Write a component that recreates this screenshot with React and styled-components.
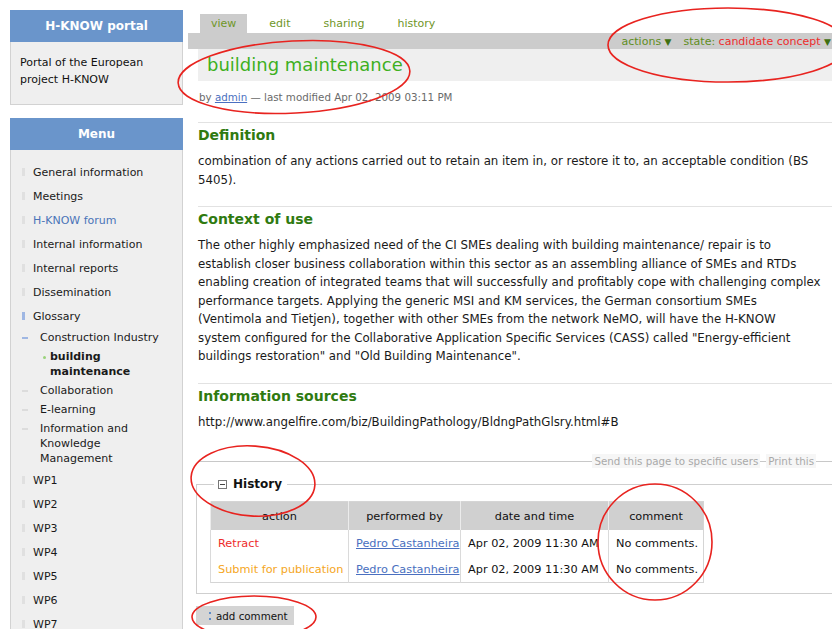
import styled, { createGlobalStyle } from "styled-components";

const GlobalStyle = createGlobalStyle`
  html, body {
    margin: 0;
    padding: 0;
    background: #fff;
    overflow: hidden;
  }
  body {
    font-family: "DejaVu Sans", Verdana, sans-serif;
    font-size: 11px;
    color: #111;
  }
`;

// left navigation tree
const menuItems = [
  { label: "General information", level: 0 },
  { label: "Meetings", level: 0 },
  { label: "H-KNOW forum", level: 0, link: true },
  { label: "Internal information", level: 0 },
  { label: "Internal reports", level: 0 },
  { label: "Dissemination", level: 0 },
  { label: "Glossary", level: 0, open: true },
  { label: "Construction Industry", level: 1, open: true },
  { label: ["building", "maintenance"], level: 2, current: true },
  { label: "Collaboration", level: 1 },
  { label: "E-learning", level: 1 },
  { label: ["Information and", "Knowledge", "Management"], level: 1 },
  { label: "WP1", level: 0 },
  { label: "WP2", level: 0 },
  { label: "WP3", level: 0 },
  { label: "WP4", level: 0 },
  { label: "WP5", level: 0 },
  { label: "WP6", level: 0 },
  { label: "WP7", level: 0 },
];

const tabs = ["view", "edit", "sharing", "history"];

const contextLines = [
  "The other highly emphasized need of the CI SMEs dealing with building maintenance/ repair is to",
  "establish closer business collaboration within this sector as an assembling alliance of SMEs and RTDs",
  "enabling creation of integrated teams that will successfully and profitably cope with challenging complex",
  "performance targets. Applying the generic MSI and KM services, the German consortium SMEs",
  "(Ventimola and Tietjen), together with other SMEs from the network NeMO, will have the H-KNOW",
  "system configured for the Collaborative Application Specific Services (CASS) called \"Energy-efficient",
  "buildings restoration\" and \"Old Building Maintenance\".",
];

const history = [
  { action: "Retract", kind: "retract", who: "Pedro Castanheira", when: "Apr 02, 2009 11:30 AM", comment: "No comments." },
  { action: "Submit for publication", kind: "submit", who: "Pedro Castanheira", when: "Apr 02, 2009 11:30 AM", comment: "No comments." },
];

// hand-drawn review marks laid over the page
const marks = [
  { cx: 294, cy: 77, rx: 116, ry: 36, rot: -3 },
  { cx: 728, cy: 45, rx: 120, ry: 37, rot: 0 },
  { cx: 253, cy: 481, rx: 62, ry: 35, rot: 4 },
  { cx: 655, cy: 542, rx: 57, ry: 58, rot: 0 },
  { cx: 254, cy: 617, rx: 62, ry: 21, rot: 0 },
];

const App = () => {
  return (
    <Page>
      <GlobalStyle />
      <Sidebar>
        <Portlet>
          <PortletHeader>H-KNOW portal</PortletHeader>
          <PortalBody>
            Portal of the European
            <br />
            project H-KNOW
          </PortalBody>
        </Portlet>
        <Portlet $grow>
          <PortletHeader>Menu</PortletHeader>
          <MenuBody>
            {menuItems.map((item, i) => (
              <MenuItem key={i} $level={item.level}>
                <Bullet $level={item.level} $open={item.open} $current={item.current} />
                <MenuLabel $link={item.link} $current={item.current}>
                  {Array.isArray(item.label)
                    ? item.label.map((l, j) => (
                        <span key={j}>
                          {j > 0 && <br />}
                          {l}
                        </span>
                      ))
                    : item.label}
                </MenuLabel>
              </MenuItem>
            ))}
          </MenuBody>
        </Portlet>
      </Sidebar>

      <Main>
        <Tabs>
          {tabs.map((t) => (
            <Tab key={t} $active={t === "view"}>
              {t}
            </Tab>
          ))}
        </Tabs>
        <ActionBar>
          <ActionLink>
            actions <Caret>▼</Caret>
          </ActionLink>
          <ActionLink>
            state: <StateValue>candidate concept</StateValue> <Caret>▼</Caret>
          </ActionLink>
        </ActionBar>
        <TitleBox>building maintenance</TitleBox>
        <Byline>
          by <UserLink>admin</UserLink> — last modified Apr 02, 2009 03:11 PM
        </Byline>

        <Section $first>
          <SectionTitle>Definition</SectionTitle>
          <Text>
            combination of any actions carried out to retain an item in, or restore it to, an acceptable condition (BS
            <br />
            5405).
          </Text>
        </Section>

        <Section>
          <SectionTitle>Context of use</SectionTitle>
          <Text>
            {contextLines.map((line, i) => (
              <span key={i}>
                {i > 0 && <br />}
                {line}
              </span>
            ))}
          </Text>
        </Section>

        <Section>
          <SectionTitle>Information sources</SectionTitle>
          <Text>http://www.angelfire.com/biz/BuildingPathology/BldngPathGlsry.html#B</Text>
        </Section>

        <DocActions>
          <Rule $grow />
          <DocAction>Send this page to specific users</DocAction>
          <Rule />
          <DocAction>Print this</DocAction>
          <Rule $tail />
        </DocActions>

        <HistoryBox>
          <Legend>
            <svg width="9" height="9" viewBox="0 0 9 9">
              <rect x="0.5" y="0.5" width="8" height="8" fill="#fff" stroke="#777" />
              <line x1="2" y1="4.5" x2="7" y2="4.5" stroke="#444" />
            </svg>
            <b>History</b>
          </Legend>
          <HistoryTable>
            <colgroup>
              <col style={{ width: 138 }} />
              <col style={{ width: 112 }} />
              <col style={{ width: 148 }} />
              <col style={{ width: 95 }} />
            </colgroup>
            <thead>
              <tr>
                <Th>action</Th>
                <Th>performed by</Th>
                <Th>date and time</Th>
                <Th>comment</Th>
              </tr>
            </thead>
            <tbody>
              {history.map((row, i) => (
                <tr key={i}>
                  <Td $kind={row.kind}>{row.action}</Td>
                  <Td>
                    <UserLink>{row.who}</UserLink>
                  </Td>
                  <Td>{row.when}</Td>
                  <Td>{row.comment}</Td>
                </tr>
              ))}
            </tbody>
          </HistoryTable>
        </HistoryBox>

        <CommentButton>
          <Dots />
          add comment
        </CommentButton>
      </Main>

      <Marks width="832" height="629" viewBox="0 0 832 629">
        {marks.map((m, i) => (
          <ellipse
            key={i}
            cx={m.cx}
            cy={m.cy}
            rx={m.rx}
            ry={m.ry}
            transform={`rotate(${m.rot} ${m.cx} ${m.cy})`}
            fill="none"
            stroke="#e8231f"
            strokeWidth="1.6"
          />
        ))}
      </Marks>
    </Page>
  );
};

const Page = styled.div`
  position: relative;
  display: flex;
  align-items: flex-start;
  width: 832px;
  height: 629px;
  overflow: hidden;
`;

const Sidebar = styled.aside`
  width: 173px;
  flex-shrink: 0;
  margin: 10px 0 0 10px;
  display: flex;
  flex-direction: column;
  gap: 13px;
  height: 640px;
`;

const Portlet = styled.div`
  display: flex;
  flex-direction: column;
  flex: ${(p) => (p.$grow ? 1 : "none")};
`;

const PortletHeader = styled.div`
  height: 32px;
  line-height: 32px;
  background: #6a95cb;
  color: #fff;
  font-weight: bold;
  font-size: 12px;
  text-align: center;
`;

const PortalBody = styled.div`
  height: 63px;
  box-sizing: border-box;
  padding: 12px 9px 0;
  line-height: 17px;
  background: #efefef;
  border: 1px solid #d2d2d2;
  border-top: none;
`;

const MenuBody = styled.ul`
  flex: 1;
  margin: 0;
  list-style: none;
  padding: 10px 0 0;
  background: #efefef;
  border: 1px solid #d2d2d2;
  border-top: none;
`;

const MenuItem = styled.li`
  position: relative;
  display: flex;
  line-height: 15px;
  padding: ${(p) => (p.$level === 0 ? "4.5px 0" : "2px 0")};
  padding-left: ${(p) => [22, 29, 39][p.$level]}px;
`;

const Bullet = styled.span`
  position: absolute;
  top: ${(p) => (p.$level === 0 ? 8 : 9)}px;
  left: ${(p) => (p.$level === 2 ? 32 : 11)}px;
  width: ${(p) => (p.$level === 0 ? 3 : p.$level === 1 ? 6 : 3)}px;
  height: ${(p) => (p.$level === 0 ? 8 : p.$level === 1 ? 2 : 3)}px;
  border-radius: ${(p) => (p.$level === 2 ? "50%" : "0")};
  background: ${(p) =>
    p.$current ? "#9ad27a" : p.$open ? "#9fb7e3" : p.$level === 1 ? "#dcdcdc" : "#e0e0e0"};
`;

const MenuLabel = styled.span`
  color: ${(p) => (p.$link ? "#4a74b8" : "#1a1a1a")};
  font-weight: ${(p) => (p.$current ? "bold" : "normal")};
`;

const Main = styled.main`
  width: 644px;
  flex-shrink: 0;
  margin: 14px 0 0 5px;
`;

const Tabs = styled.div`
  display: flex;
  height: 19px;
  padding-left: 12px;
`;

const Tab = styled.span`
  padding: 0 11px;
  margin-right: 11px;
  line-height: 19px;
  color: #6f9628;
  background: ${(p) => (p.$active ? "#cccccc" : "transparent")};
`;

const ActionBar = styled.div`
  height: 16px;
  background: #cccccc;
  display: flex;
  justify-content: flex-end;
  align-items: center;
  gap: 12px;
  padding-right: 1px;
`;

const ActionLink = styled.span`
  color: #5f8c1e;
  white-space: nowrap;
`;

const Caret = styled.span`
  font-size: 9px;
  color: #3f6f10;
`;

const StateValue = styled.span`
  color: #ee2b2b;
`;

const TitleBox = styled.h1`
  margin: 0 0 0 10px;
  height: 32px;
  line-height: 32px;
  padding-left: 9px;
  background: #efefef;
  color: #3eb01e;
  font-size: 18px;
  font-weight: normal;
`;

const Byline = styled.div`
  margin-top: 9px;
  padding-left: 11px;
  line-height: 14px;
  font-size: 10.3px;
  color: #6a6a6a;
`;

const UserLink = styled.a`
  color: #4a6fc0;
  text-decoration: underline;
`;

const Section = styled.section`
  margin: ${(p) => (p.$first ? "18px" : "0")} 0 0 10px;
  border-top: 1px solid #e2e2e2;
  padding-bottom: 17px;
`;

const SectionTitle = styled.h2`
  margin: 3px 0 0;
  font-size: 14px;
  line-height: 18px;
  color: #2f7a10;
`;

const Text = styled.p`
  margin: 8px 0 0;
  font-size: 11.8px;
  line-height: 18.5px;
  white-space: nowrap;
  color: #1a1a1a;
`;

const DocActions = styled.div`
  display: flex;
  align-items: center;
  margin: 6px -4px 0 10px;
  height: 14px;
`;

const Rule = styled.span`
  flex: ${(p) => (p.$grow ? 1 : "none")};
  width: ${(p) => (p.$tail ? 20 : 6)}px;
  border-top: 1px solid #c8c8c8;
`;

const DocAction = styled.span`
  font-size: 10.3px;
  color: #a9a9a9;
  background: #f6f6f6;
  padding: 0 2px;
  line-height: 14px;
`;

const HistoryBox = styled.fieldset`
  margin: 9px -20px 0 8px;
  padding: 0 13px 10px;
  border: 1px solid #cfcfcf;
`;

const Legend = styled.legend`
  display: flex;
  align-items: center;
  gap: 6px;
  margin-left: 4px;
  padding: 0 5px 0 4px;
  font-size: 12px;
  line-height: 15px;
  b {
    color: #111;
  }
`;

const HistoryTable = styled.table`
  margin-top: 9px;
  border-collapse: collapse;
  table-layout: fixed;
  width: 493px;
  font-size: 11.3px;
  border: 1px solid #d5d5d5;
`;

const Th = styled.th`
  height: 28px;
  padding: 0;
  background: #d0d0d0;
  font-weight: normal;
  text-align: center;
  color: #111;
  border-left: 1px solid #ececec;
`;

const Td = styled.td`
  height: 26px;
  padding: 0 6px 0 7px;
  white-space: nowrap;
  overflow: visible;
  border-left: 1px solid #dadada;
  color: ${(p) =>
    p.$kind === "retract" ? "#ee2b2b" : p.$kind === "submit" ? "#f5a623" : "#111"};
`;

const CommentButton = styled.button`
  margin: 12px 0 0 8px;
  height: 19px;
  padding: 0 6px 0 13px;
  display: flex;
  align-items: center;
  gap: 5px;
  background: #d4d4d4;
  border: none;
  font-family: inherit;
  font-size: 10.3px;
  color: #111;
`;

const Dots = styled.span`
  width: 2px;
  height: 8px;
  background: linear-gradient(#5d8cc9 0 2px, transparent 2px 6px, #5d8cc9 6px 8px);
`;

const Marks = styled.svg`
  position: absolute;
  left: 0;
  top: 0;
  pointer-events: none;
`;

export default App;
